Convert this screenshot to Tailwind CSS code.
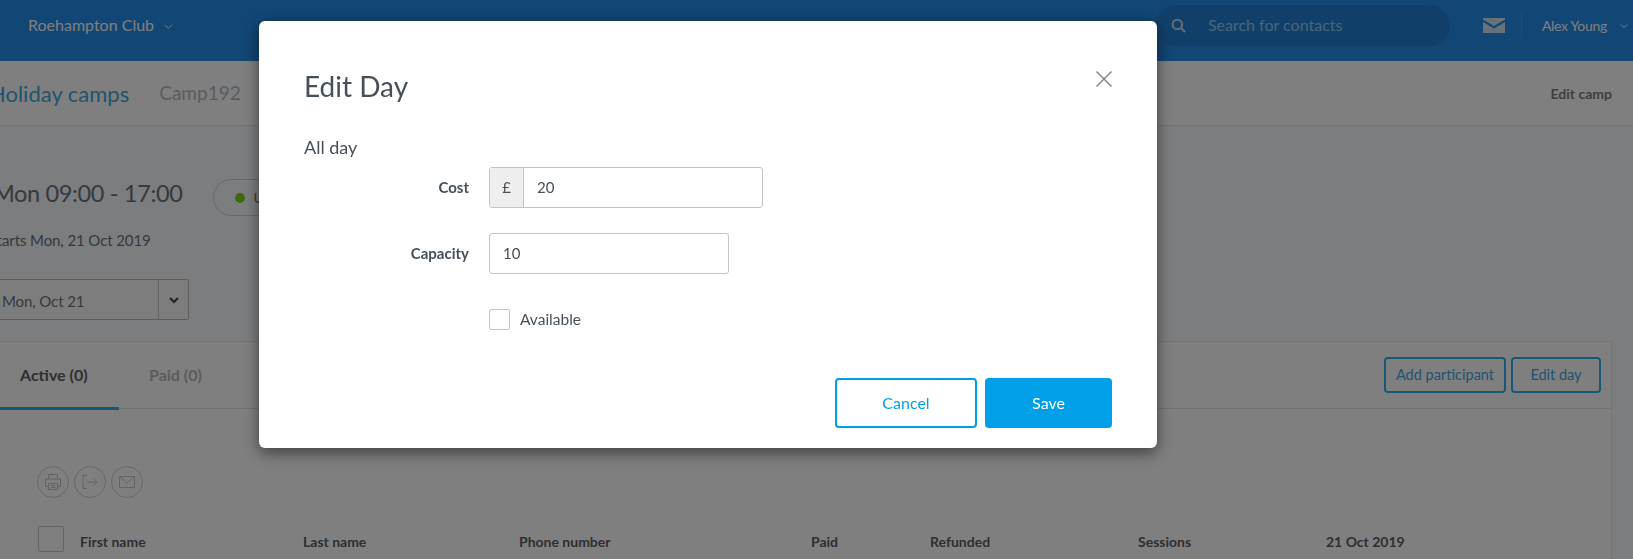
<!DOCTYPE html>
<html lang="en">
<head>
  <meta charset="UTF-8" />
  <title>Edit Day</title>
  <script src="https://cdn.jsdelivr.net/npm/@tailwindcss/browser@4"></script>
</head>
<body class="h-screen overflow-hidden bg-[#f9fafc] font-['Lato',sans-serif] text-[#6a7480]">
  <!-- top bar -->
  <header class="flex h-[61px] items-center bg-[#248ce8] pb-[10px] text-white">
    <div class="ml-[28px] flex items-center gap-[10px] text-[16px]">
      <span class="mb-[2px]">Roehampton Club</span>
      <svg class="mt-[2px] size-[9px]" viewBox="0 0 10 10" fill="none" stroke="currentColor" stroke-width="1"><path d="M1 3l4 4 4-4" /></svg>
    </div>
    <div class="ml-auto flex h-[41px] w-[295px] items-center rounded-full bg-[#2180d4] pl-[16px]">
      <svg class="size-[15px] text-[#c9d8e6]" viewBox="0 0 16 16" fill="none" stroke="currentColor" stroke-width="2.2"><circle cx="6.8" cy="6.8" r="5" /><path d="M10.5 10.5l4.5 4.5" /></svg>
      <span class="mb-[2px] ml-[22px] text-[16px] text-[#95c8f0]">Search for contacts</span>
    </div>
    <svg class="ml-[33px] h-[15px] w-[22px]" viewBox="0 0 22 15"><path fill="#d2e3f2" d="M0 0h22v1.500l-11 6.500L0 1.500zM0 4l11 6.500L22 4v11H0z" /></svg>
    <div class="ml-[16px] h-[25px] w-px bg-[#3f9bea]"></div>
    <span class="ml-[20px] text-[14px] tracking-[-0.3px]">Alex Young</span>
    <svg class="ml-[13px] mr-[5px] size-[8px]" viewBox="0 0 10 10" fill="none" stroke="currentColor" stroke-width="1.200"><path d="M1 3l4 4 4-4" /></svg>
  </header>

  <!-- sub header -->
  <div class="flex h-[65px] items-center border-b border-[#e6e6e6] bg-white">
    <span class="-ml-[11px] text-[22px] text-[#3fa9e0]">Holiday camps</span>
    <span class="ml-[30px] text-[19px] text-[#b0bac6]">Camp192</span>
    <span class="ml-auto mr-[21px] text-[14px] font-bold text-[#808080]">Edit camp</span>
  </div>

  <!-- day summary -->
  <section class="h-[215px] pt-[53px]">
    <div class="flex h-[37px] items-start">
      <span class="-ml-[7px] -mt-[5px] text-[23.5px] leading-[38px] tracking-[-0.35px]">Mon 09:00 - 17:00</span>
      <div class="ml-[30px] flex h-[37px] w-[260px] items-center rounded-full border border-[#d0d0d0] pl-[21px]">
        <span class="size-[10px] rounded-full bg-[#7ed321]"></span>
        <span class="ml-[9px] text-[14px]">Upcoming</span>
      </div>
    </div>
    <p class="-ml-[11px] mt-[14px] text-[15px] leading-[20px] tracking-[-0.1px]">Starts Mon, 21 Oct 2019</p>
    <div class="-ml-[4px] mt-[29px] flex h-[41px] w-[193px] items-center rounded-[2px] border border-[#bdbdbd] bg-[#fbfbfb]">
      <span class="ml-[5px] mt-[3px] text-[15px] tracking-[-0.1px]">Mon, Oct 21</span>
      <span class="ml-auto flex h-full w-[30px] items-center justify-center border-l border-[#c9c9c9]">
        <svg class="size-[12px]" viewBox="0 0 12 12" fill="none" stroke="#3f4a56" stroke-width="2.2"><path d="M2 4l4 4 4-4" /></svg>
      </span>
    </div>
  </section>

  <!-- participants card -->
  <section class="mr-[21px] h-[218px] border-t border-r border-[#e6e8ec] bg-white">
    <div class="flex h-[67px] items-center border-b border-[#e3e6ea]">
      <div class="relative flex h-full w-[119px] items-center pl-[20px] text-[16px] font-bold text-[#5a5e66]">
        Active (0)
        <span class="absolute -bottom-[2px] left-0 h-[3px] w-full bg-[#33aef0]"></span>
      </div>
      <span class="ml-[30px] text-[16px] font-bold text-[#b5b8bc]">Paid (0)</span>
      <div class="ml-auto mr-[10px] flex gap-[5px] text-[14.5px] text-[#3fa9e0]">
        <button class="h-[36px] w-[122px] rounded-[4px] border-2 border-[#33aef0]">Add participant</button>
        <button class="h-[36px] w-[90px] rounded-[4px] border-2 border-[#33aef0]">Edit day</button>
      </div>
    </div>
    <div class="ml-[37px] mt-[57px] flex gap-[5px] text-[#c6c6c6]">
      <span class="flex size-[32px] items-center justify-center rounded-full border border-[#d0d0d0]">
        <svg class="size-[18px]" viewBox="0 0 18 18" fill="none" stroke="currentColor"><path d="M4.500 6V1.500h9V6M4.500 13.500H1.500V6h15v7.500h-3M4.500 10.500h9v6h-9zM6.500 12.500h5M6.500 14.500h5" /></svg>
      </span>
      <span class="flex size-[32px] items-center justify-center rounded-full border border-[#d0d0d0]">
        <svg class="size-[18px]" viewBox="0 0 18 18" fill="none" stroke="currentColor"><path d="M6 2.500H2v13h4M6 9h10M12.500 5.500L16 9l-3.500 3.500" /></svg>
      </span>
      <span class="flex size-[32px] items-center justify-center rounded-full border border-[#d0d0d0]">
        <svg class="h-[14px] w-[18px]" viewBox="0 0 18 14" fill="none" stroke="currentColor"><path d="M1.500 1.500h15v11h-15zM1.500 1.500L9 8l7.500-6.500" /></svg>
      </span>
    </div>
    <div class="mt-[28px] flex h-[26px] items-center text-[14px] font-bold text-[#5a5e66]">
      <span class="ml-[38px] size-[26px] rounded-[2px] border border-[#c8c8c8] bg-white"></span>
      <span class="ml-[16px] mt-[4px] w-[223px]">First name</span>
      <span class="mt-[4px] w-[216px]">Last name</span>
      <span class="mt-[4px] w-[292px]">Phone number</span>
      <span class="mt-[4px] w-[119px]">Paid</span>
      <span class="mt-[4px] w-[208px]">Refunded</span>
      <span class="mt-[4px] w-[188px]">Sessions</span>
      <span class="mt-[4px]">21 Oct 2019</span>
    </div>
  </section>

  <!-- modal -->
  <div class="fixed inset-0 bg-black/50"></div>
  <div class="fixed left-[259px] top-[21px] h-[427px] w-[898px] rounded-[6px] bg-white text-[#46505a] shadow-[0_5px_15px_rgba(0,0,0,0.5)]">
    <div class="flex items-start justify-between pl-[45px] pr-[45px] pt-[42px]">
      <h2 class="text-[28px] leading-[46px]">Edit Day</h2>
      <svg class="mt-[8px] size-[16px]" viewBox="0 0 16 16" fill="none" stroke="#7d7d7d" stroke-width="1.400"><path d="M.5.5l15 15M15.500.5l-15 15" /></svg>
    </div>
    <p class="ml-[45px] mt-[26px] text-[18px] leading-[24px]">All day</p>
    <div class="mt-[8px] flex h-[41px] items-center">
      <label class="w-[210px] text-right text-[15px] font-bold">Cost</label>
      <div class="ml-[20px] flex h-full w-[274px] rounded-[3px] border border-[#c4c4c4]">
        <span class="flex w-[34px] items-center justify-center border-r border-[#c4c4c4] bg-[#eeeeee] text-[15px]">£</span>
        <span class="flex items-center pb-[1px] pl-[13px] text-[15px]">20</span>
      </div>
    </div>
    <div class="mt-[25px] flex h-[41px] items-center">
      <label class="w-[210px] text-right text-[15px] font-bold">Capacity</label>
      <div class="ml-[20px] flex h-full w-[240px] items-center rounded-[3px] border border-[#c4c4c4] pb-[1px] pl-[13px] text-[15px]">10</div>
    </div>
    <div class="ml-[230px] mt-[34px] flex items-center">
      <span class="size-[21px] rounded-[2px] border border-[#c4c4c4]"></span>
      <span class="ml-[10px] text-[15.5px]">Available</span>
    </div>
    <div class="mr-[45px] mt-[47px] flex justify-end gap-[8px] text-[16px]">
      <button class="h-[50px] w-[142px] rounded-[4px] border-2 border-[#009fe8] text-[#009fe8]">Cancel</button>
      <button class="h-[50px] w-[127px] rounded-[4px] bg-[#009fe8] text-white">Save</button>
    </div>
  </div>
</body>
</html>
